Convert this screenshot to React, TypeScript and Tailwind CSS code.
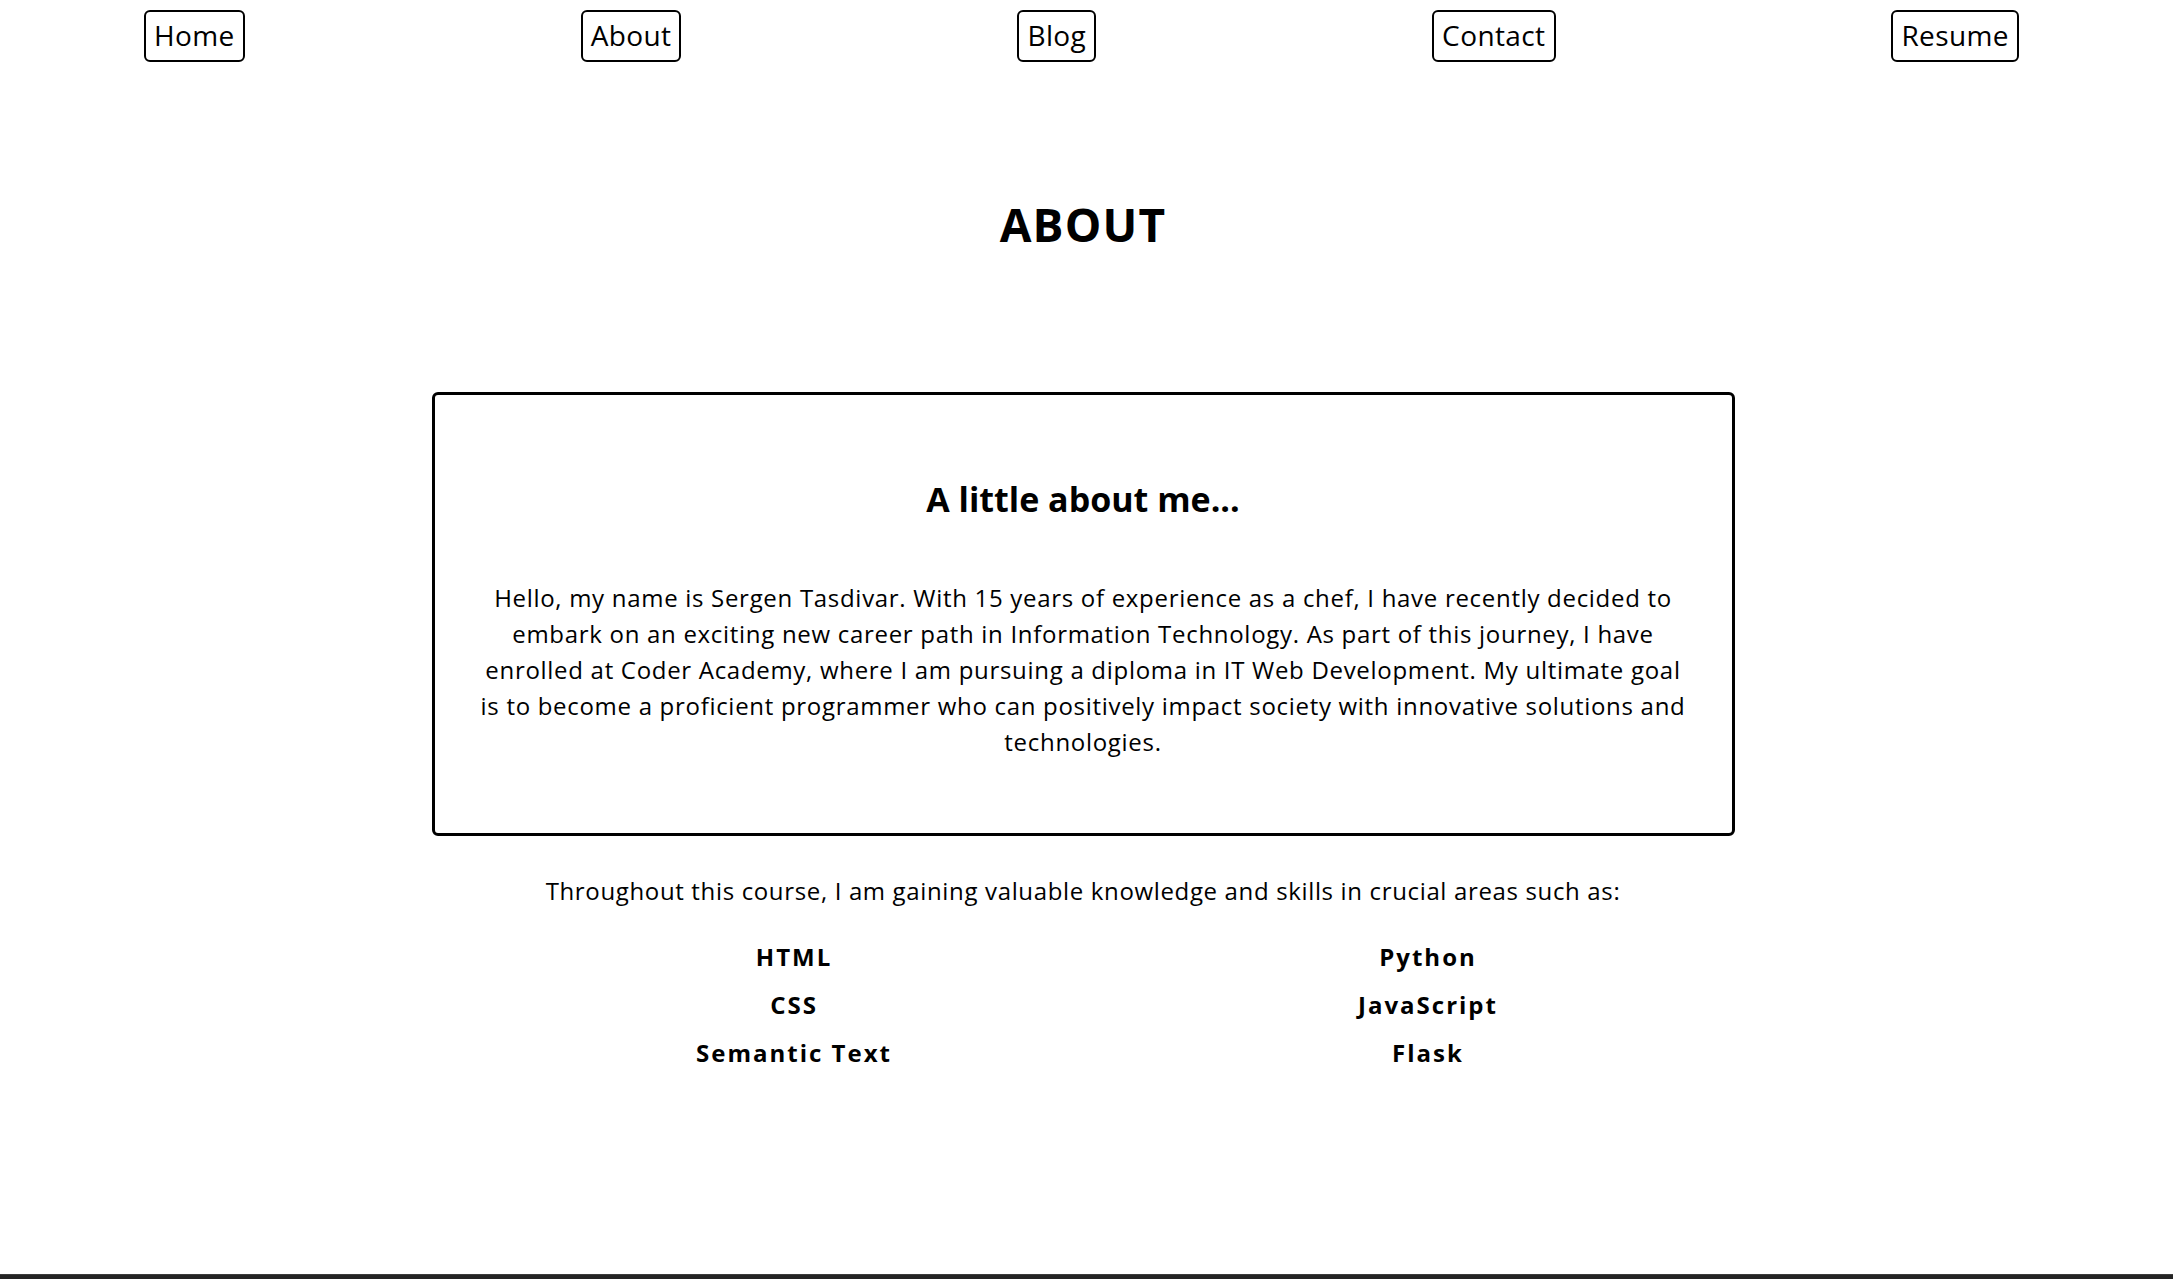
import { FC } from 'react'

const NAV_LINKS = ['Home', 'About', 'Blog', 'Contact', 'Resume']

const SKILLS = ['HTML', 'Python', 'CSS', 'JavaScript', 'Semantic Text', 'Flask']

const App: FC = () => {
  return (
    <div
      className="min-h-screen flex flex-col bg-white text-black"
      style={{ fontFamily: '"Open Sans", "Liberation Sans", sans-serif' }}
    >
      <div className="flex-1 pr-[7px]">
        {/* Nav */}
        <nav className="flex items-start justify-between pt-[10px] pl-[144px] pr-[147px]">
          {NAV_LINKS.map((label) => (
            <a
              key={label}
              href="#"
              className="h-[52px] px-[8px] border-[2.5px] border-black rounded-[6px] text-[28px] leading-[47px] text-black tracking-[0.4px]"
            >
              {label}
            </a>
          ))}
        </nav>

        {/* Title */}
        <h1 className="mt-[134px] text-center text-[46px] leading-[56px] font-bold tracking-[1.2px]">ABOUT</h1>

        {/* Card */}
        <section className="mx-auto mt-[140px] w-[1303px] border-[3px] border-black rounded-[6px] px-[46px] pt-[82px] pb-[73px] text-center">
          <h2 className="text-[34px] leading-[44px] font-bold">A little about me...</h2>
          <p className="mt-[59px] text-[24px] leading-[36px] tracking-[0.7px]">
            Hello, my name is Sergen Tasdivar. With 15 years of experience as a chef, I have recently decided to
            embark on an exciting new career path in Information Technology. As part of this journey, I have
            enrolled at Coder Academy, where I am pursuing a diploma in IT Web Development. My ultimate goal is to
            become a proficient programmer who can positively impact society with innovative solutions and
            technologies.
          </p>
        </section>

        <p className="mt-[37px] text-center text-[24px] leading-[36px] tracking-[0.65px]">
          Throughout this course, I am gaining valuable knowledge and skills in crucial areas such as:
        </p>

        <ul className="ml-[437px] mt-[24px] w-[1308px] pl-10 grid grid-cols-2">
          {SKILLS.map((s) => (
            <li key={s} className="text-center text-[24px] leading-[48px] font-bold tracking-[2px]">
              {s}
            </li>
          ))}
        </ul>
      </div>

      {/* bottom strip */}
      <div className="h-[5px] border-t border-[#3c3c3c] bg-[#242424]" />
    </div>
  )
}

export default App
